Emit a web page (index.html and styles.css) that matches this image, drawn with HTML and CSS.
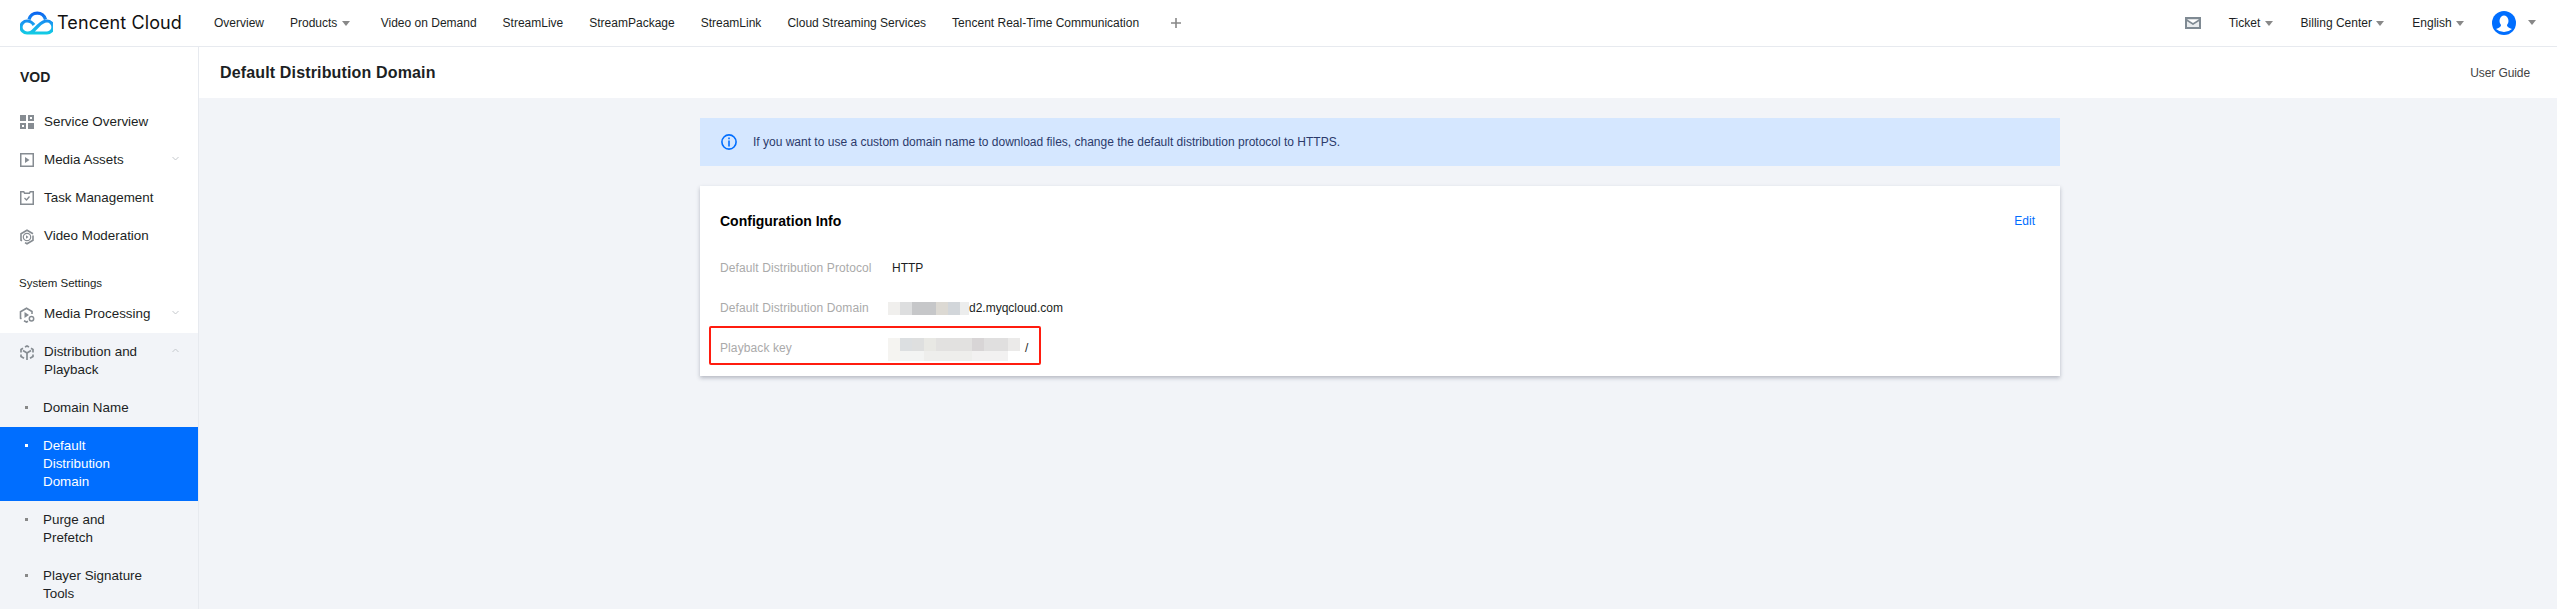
FILE: index.html
```html
<!DOCTYPE html>
<html lang="en">
<head>
    <meta charset="UTF-8">
    <meta name="viewport" content="width=device-width, initial-scale=1.0">
    <title>Default Distribution Domain</title>
    <link rel="stylesheet" href="styles.css">
</head>
<body>
    <header class="topbar">
        <div class="logo">
            <svg class="logo-mark" width="33" height="24" viewBox="0 0 33 24">
                <defs>
                    <linearGradient id="cloud-grad" gradientUnits="userSpaceOnUse" x1="0" y1="1" x2="0" y2="24">
                        <stop offset="0" stop-color="#0a62f0"/>
                        <stop offset="0.5" stop-color="#1a9cf0"/>
                        <stop offset="1" stop-color="#12d2e2"/>
                    </linearGradient>
                </defs>
                <path d="M9 8.500A8.500 8.500 0 0 1 25.500 8.500" fill="none" stroke="url(#cloud-grad)" stroke-width="3.200"/>
                <path d="M14 14C12 11 10 10 7 10A6 6 0 0 0 7 22H27A6 6 0 0 0 27 10C23 10 21 12 18 15L13 20C11.500 21.500 10 22 8 22" fill="none" stroke="url(#cloud-grad)" stroke-width="3.200"/>
            </svg>
            <span class="logo-text">Tencent Cloud</span>
        </div>
        <nav class="nav">
            <a class="nav-item">Overview</a>
            <a class="nav-item nav-products">Products <i class="caret"></i></a>
            <a class="nav-item">Video on Demand</a>
            <a class="nav-item">StreamLive</a>
            <a class="nav-item">StreamPackage</a>
            <a class="nav-item">StreamLink</a>
            <a class="nav-item">Cloud Streaming Services</a>
            <a class="nav-item">Tencent Real-Time Communication</a>
            <svg class="nav-plus" width="10" height="10" viewBox="0 0 10 10"><path d="M5 0v10M0 5h10" stroke="#888" stroke-width="1.600"/></svg>
        </nav>
        <div class="top-right">
            <svg class="mail" width="16" height="12" viewBox="0 0 16 12">
                <path d="M0 0h16v12H0z" fill="#7f8a93"/>
                <path d="M2 2.200h12L8 6z" fill="#fff"/>
                <path d="M2 4.200L8 8l6-3.800V10H2z" fill="#e9ecee"/>
            </svg>
            <a class="top-link">Ticket <i class="caret"></i></a>
            <a class="top-link">Billing Center <i class="caret"></i></a>
            <a class="top-link">English <i class="caret"></i></a>
            <svg class="avatar" width="24" height="24" viewBox="0 0 24 24">
                <circle cx="12" cy="12" r="12" fill="#006eff"/>
                <path d="M12 4.500a4.500 5.500 0 0 1 3 9.500c0 1.500 1 2.500 5 4a12 12 0 0 1-16 0c4-1.500 5-2.500 5-4a4.500 5.500 0 0 1 3-9.500z" fill="#fff"/>
            </svg>
            <i class="caret caret-avatar"></i>
        </div>
    </header>

    <div class="layout">
        <aside class="sidebar">
            <div class="side-title">VOD</div>
            <ul class="menu">
                <li class="menu-item">
                    <svg class="menu-icon" width="14" height="14" viewBox="0 0 14 14"><path d="M0 0h6v6H0zM8 0h6v6H8zM0 8h6v6H0zM8 8h6v6H8z" fill="#868c92"/><path d="M10 2h2v2h-2zM2 10h2v2H2z" fill="#fff"/></svg>
                    Service Overview
                </li>
                <li class="menu-item">
                    <svg class="menu-icon" width="14" height="14" viewBox="0 0 14 14"><path d="M.75.75h12.500v12.500H.75z" fill="none" stroke="#868c92" stroke-width="1.500"/><path d="M5 4l4.500 3L5 10z" fill="#868c92"/></svg>
                    Media Assets
                    <svg class="chevron" width="7" height="5" viewBox="0 0 7 5"><path d="M.5 1l3 3 3-3" fill="none" stroke="#c4c8cc"/></svg>
                </li>
                <li class="menu-item">
                    <svg class="menu-icon" width="14" height="14" viewBox="0 0 14 14"><path d="M.75.75h3l.8 1.500h4.900l.8-1.500h3v12.500H.75z" fill="none" stroke="#868c92" stroke-width="1.500"/><path d="M4.500 7l2 2 3-3.500" fill="none" stroke="#868c92" stroke-width="1.300"/></svg>
                    Task Management
                </li>
                <li class="menu-item">
                    <svg class="menu-icon" width="14" height="16" viewBox="0 0 14 16"><path d="M2 11.800L1 11.200V4.800L7 1.200l6 3.600M13 6.500v4.700L7 14.800l-2-1.200" fill="none" stroke="#868c92" stroke-width="1.600"/><circle cx="7" cy="8" r="3.700" fill="none" stroke="#868c92" stroke-width="1.200"/><path d="M6 6.300l2.500 1.700L6 9.700z" fill="#868c92"/></svg>
                    Video Moderation
                </li>
            </ul>
            <div class="side-group">System Settings</div>
            <ul class="menu">
                <li class="menu-item">
                    <svg class="menu-icon menu-icon-wide" width="16" height="16" viewBox="0 0 16 16"><path d="M2.500 11.800L1.500 11.200V4.800L7.500 1.200l5.500 3.300v2.500M5 13.700l2.500 1.300 1.500-.8" fill="none" stroke="#868c92" stroke-width="1.600"/><path d="M5.500 5l4.500 3-4.500 3z" fill="#868c92"/><circle cx="12.500" cy="11.800" r="2.200" fill="#fff" stroke="#868c92" stroke-width="1.500"/></svg>
                    Media Processing
                    <svg class="chevron" width="7" height="5" viewBox="0 0 7 5"><path d="M.5 1l3 3 3-3" fill="none" stroke="#c4c8cc"/></svg>
                </li>
            </ul>
            <div class="submenu">
                <div class="menu-item">
                    <svg class="menu-icon" width="14" height="16" viewBox="0 0 14 16"><path d="M5 2L7 1l2 1M11 3.200l2 1.200v3M1 7.500v-3l2-1.200M1 9.500v2l3 1.800M13 9.500v2l-3 1.800M7 15v-7M3 5.500L7 8l4-2.500" fill="none" stroke="#868c92" stroke-width="1.700"/></svg>
                    <span class="menu-label">Distribution and Playback</span>
                    <svg class="chevron" width="7" height="5" viewBox="0 0 7 5"><path d="M.5 4l3-3 3 3" fill="none" stroke="#c4c8cc"/></svg>
                </div>
                <a class="sub-item">Domain Name</a>
                <a class="sub-item active">Default Distribution Domain</a>
                <a class="sub-item">Purge and Prefetch</a>
                <a class="sub-item">Player Signature Tools</a>
            </div>
        </aside>

        <main class="main">
            <div class="page-head">
                <h2 class="page-title">Default Distribution Domain</h2>
                <a class="guide">User Guide</a>
            </div>
            <div class="content">
                <div class="alert">
                    <svg class="alert-icon" width="16" height="16" viewBox="0 0 16 16">
                        <circle cx="8" cy="8" r="7.100" fill="none" stroke="#006eff" stroke-width="1.600"/>
                        <path d="M7.200 3.500h1.600v1.700H7.200zM7.200 6.500h1.600v6H7.200z" fill="#006eff"/>
                    </svg>
                    If you want to use a custom domain name to download files, change the default distribution protocol to HTTPS.
                </div>
                <section class="card">
                    <div class="card-head">
                        <h3 class="card-title">Configuration Info</h3>
                        <a class="edit">Edit</a>
                    </div>
                    <div class="row">
                        <span class="row-label">Default Distribution Protocol</span>
                        <span class="row-value">HTTP</span>
                    </div>
                    <div class="row">
                        <span class="row-label">Default Distribution Domain</span>
                        <span class="row-value"><i class="mosaic mosaic-domain"></i>d2.myqcloud.com</span>
                    </div>
                    <div class="row">
                        <span class="row-label">Playback key</span>
                        <span class="row-value"><i class="mosaic mosaic-key"></i>/</span>
                    </div>
                    <div class="highlight"></div>
                </section>
            </div>
        </main>
    </div>
</body>
</html>
```

FILE: styles.css
```css
* {
    box-sizing: border-box;
}
html, body {
    height: 100%;
}
body {
    margin: 0;
    font-family: "Liberation Sans", Arial, sans-serif;
    font-size: 12px;
    color: #1c1f24;
    background-color: #f2f4f8;
    overflow: hidden;
    display: flex;
    flex-direction: column;
}
a {
    color: inherit;
    text-decoration: none;
}
ul {
    list-style: none;
    margin: 0;
    padding: 0;
}

/* top bar */
.topbar {
    flex: none;
    height: 47px;
    display: flex;
    align-items: center;
    background-color: #fff;
    border-bottom: 1px solid #e7eaef;
    padding: 0 21px 1px 20px;
}
.logo {
    display: flex;
    align-items: center;
    width: 194px;
}
.logo-text {
    font-family: Inter, sans-serif;
    font-size: 18px;
    letter-spacing: 0.1px;
    color: #111;
    margin-left: 4px;
}
.nav {
    display: flex;
    align-items: center;
    gap: 26px;
    flex: 1;
}
.nav-products {
    margin-right: 5px;
}
.nav-plus {
    margin-left: 6px;
}
.caret {
    display: inline-block;
    width: 0;
    height: 0;
    margin-left: 1px;
    vertical-align: middle;
    border-left: 4px solid transparent;
    border-right: 4px solid transparent;
    border-top: 5px solid #888;
}
.top-right {
    display: flex;
    align-items: center;
}
.mail {
    margin-right: 28px;
}
.top-link {
    margin-right: 28px;
}
.caret-avatar {
    margin-left: 12px;
}

/* sidebar */
.layout {
    flex: 1;
    display: flex;
    min-height: 0;
}
.sidebar {
    flex: none;
    width: 199px;
    background-color: #fff;
    border-right: 1px solid #e7eaef;
    overflow: hidden;
}
.side-title {
    font-size: 14px;
    font-weight: bold;
    line-height: 18px;
    padding: 21px 20px 17px;
}
.menu-item {
    position: relative;
    display: flex;
    align-items: flex-start;
    font-size: 13.4px;
    line-height: 18px;
    padding: 10px 20px;
}
.menu-icon {
    flex: none;
    margin-right: 10px;
    margin-top: 2px;
}
.menu-icon-wide {
    margin-left: -1px;
    margin-right: 9px;
}
.menu-label {
    width: 115px;
}
.chevron {
    position: absolute;
    left: 172px;
    top: 15px;
}
.side-group {
    font-size: 11.5px;
    line-height: 18px;
    padding: 19px 19px 3px;
}
.submenu {
    background-color: #f2f4f8;
    height: 400px;
}
.sub-item {
    display: block;
    position: relative;
    font-size: 13.4px;
    line-height: 18px;
    padding: 10px 45px 10px 43px;
}
.sub-item::before {
    content: "";
    position: absolute;
    left: 25px;
    top: 17px;
    width: 3px;
    height: 3px;
    background-color: #888;
}
.sub-item.active {
    background-color: #006eff;
    color: #fff;
}
.sub-item.active::before {
    background-color: #fff;
}

/* main */
.main {
    flex: 1;
    min-width: 0;
}
.page-head {
    height: 51px;
    display: flex;
    align-items: center;
    justify-content: space-between;
    background-color: #fff;
    padding: 0 27px 0 21px;
}
.page-title {
    margin: 0;
    font-size: 16px;
    font-weight: bold;
    letter-spacing: 0.15px;
}
.guide {
    color: #444;
    letter-spacing: -0.1px;
}
.content {
    width: 1360px;
    margin: 20px 0 0 501px;
}
.alert {
    height: 48px;
    display: flex;
    align-items: center;
    padding-left: 21px;
    background-color: #d5e7ff;
    color: #2b3a6b;
}
.alert-icon {
    margin-right: 16px;
}
.card {
    position: relative;
    height: 190px;
    margin-top: 20px;
    padding: 0 25px 0 20px;
    background-color: #fff;
    box-shadow: 0 2px 4px rgba(54, 58, 80, 0.32);
}
.card-head {
    height: 70px;
    display: flex;
    align-items: center;
    justify-content: space-between;
}
.card-title {
    margin: 0;
    font-size: 14px;
    font-weight: bold;
    color: #000;
}
.edit {
    color: #006eff;
}
.row {
    height: 40px;
    display: flex;
    align-items: center;
    position: relative;
    top: -8px;
}
.row-label {
    width: 172px;
    color: #aaa;
    letter-spacing: 0.1px;
}
.row-value {
    display: flex;
    align-items: center;
}
.mosaic {
    display: block;
    margin-left: -4px;
}
.mosaic-domain {
    width: 81px;
    height: 13px;
    background: linear-gradient(90deg, #f0efed 0 12px, #dddedf 12px 24px, #c6c7c9 24px 48px, #dcd9d3 48px 60px, #d2d6da 60px 72px, #eceded 72px);
}
.mosaic-key {
    width: 137px;
    height: 23px;
    margin-top: 2px;
    background:
        linear-gradient(90deg, #f5f4f1 0 12px, #dcdfe1 12px 24px, #dedfdf 24px 36px, #e8e8e4 36px 48px, #e2e1e0 48px 84px, #d8d5d6 84px 96px, #e0dfdf 96px 120px, #ebeae9 120px 132px, #fff 132px) no-repeat 0 0 / 100% 13px,
        linear-gradient(90deg, #f5f4f1 0 12px, #f3f4f3 12px 36px, #eeeeec 36px 84px, #f2f1f1 84px 120px, #fff 120px);
}
.highlight {
    position: absolute;
    left: 9px;
    top: 140px;
    width: 332px;
    height: 39px;
    border: 2px solid #ff1c0f;
    border-radius: 2px;
}
```
